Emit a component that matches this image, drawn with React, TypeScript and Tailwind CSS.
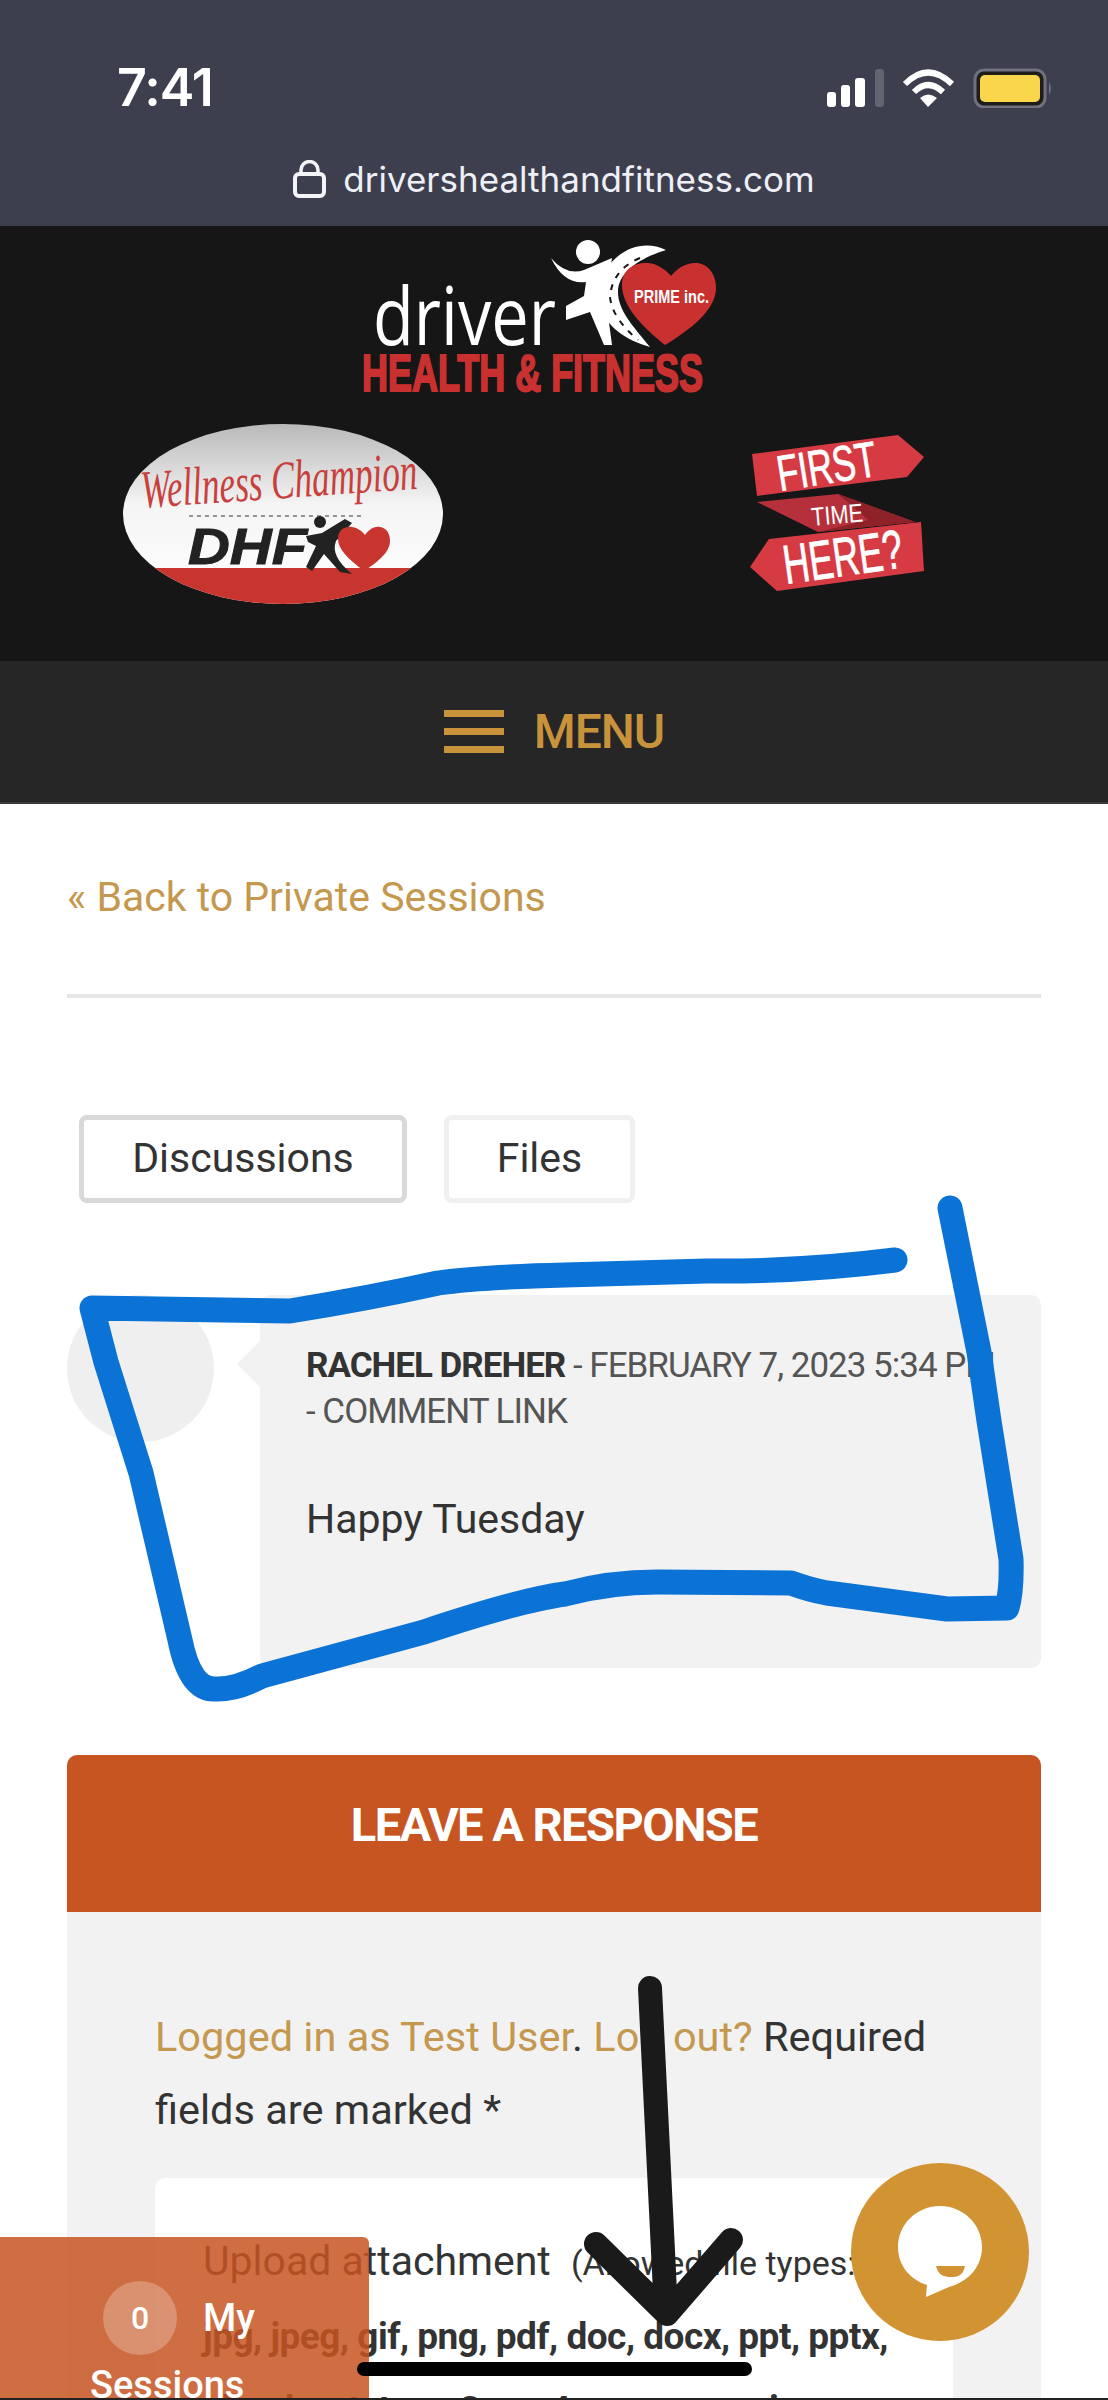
import React from "react";

const sans = "font-['Roboto',sans-serif]";

const StatusIcons = () => (
  <svg width="226" height="40" viewBox="827 67 226 40" className="block">
    {/* signal */}
    <rect x="827" y="91" width="9" height="15" rx="3" fill="#fff" />
    <rect x="841" y="84" width="9" height="22" rx="3" fill="#fff" />
    <rect x="855" y="77" width="10" height="29" rx="3" fill="#fff" />
    <rect x="875" y="68" width="9" height="38" rx="3" fill="#62646f" />
    {/* wifi */}
    <path d="M905 83 Q928 60 952 83" fill="none" stroke="#fff" strokeWidth="6" />
    <path d="M914 91 Q928 77 943 91" fill="none" stroke="#fff" strokeWidth="6" />
    <path d="M920 97 L928 106 L937 97 Q928 90 920 97 Z" fill="#fff" />
    {/* battery */}
    <rect x="975" y="69" width="70" height="37" rx="9" fill="#1f1d18" stroke="#6f7180" strokeWidth="3" />
    <rect x="980" y="74" width="60" height="27" rx="5" fill="#f9d64b" />
    <path d="M1049 81 Q1053 87 1049 94 Z" fill="#6f7180" />
  </svg>
);

const LockIcon = () => (
  <svg width="33" height="38" viewBox="0 0 33 38" className="block">
    <rect x="2" y="14" width="29" height="22" rx="4" fill="none" stroke="#f3f4f8" strokeWidth="4" />
    <path d="M8 14 V10 a8.5 8.5 0 0 1 17 0 V14" fill="none" stroke="#f3f4f8" strokeWidth="3.5" />
  </svg>
);

const MainLogo = () => (
  <svg width="370" height="165" viewBox="355 235 370 165" className="block">
    <text x="373" y="345" fontFamily="'Open Sans',sans-serif" fontWeight="400" fontSize="80" fill="#fff" textLength="183" lengthAdjust="spacingAndGlyphs">driver</text>
    <circle cx="588" cy="252" r="12" fill="#fff" />
    {/* road curling round the heart */}
    <path d="M666 250 C630 232 590 270 601 307 C606 326 625 340 650 347 C632 325 618 310 618 292 C618 272 640 258 666 250 Z" fill="#fff" />
    <path d="M640 258 Q612 270 610 297 Q612 318 638 340" fill="none" stroke="#161617" strokeWidth="2" strokeDasharray="6 7" />
    {/* runner */}
    <path d="M551 258 Q566 276 584 270 L612 258 L606 300 L612 345 L604 345 L590 312 L566 320 L566 306 L584 296 L586 282 Q564 285 551 258 Z" fill="#fff" />
    {/* heart */}
    <path d="M665 345 C640 325 622 305 622 285 C622 268 636 262 648 263 C658 264 666 270 671 276 C677 268 687 262 698 263 C710 265 716 276 716 288 C716 310 690 330 665 345 Z" fill="#c8312f" />
    <text x="634" y="303" fontFamily="'Liberation Sans',sans-serif" fontWeight="700" fontSize="18" fill="#fff" textLength="75" lengthAdjust="spacingAndGlyphs">PRIME inc.</text>
    <text x="362" y="391" fontFamily="'Liberation Sans',sans-serif" fontWeight="700" fontSize="51" fill="#c8312f" stroke="#c8312f" strokeWidth="2" textLength="341" lengthAdjust="spacingAndGlyphs">HEALTH &amp; FITNESS</text>
  </svg>
);

const ChampionBadge = () => (
  <svg width="322" height="182" viewBox="122 422 322 182" className="block">
    <defs>
      <linearGradient id="oval" x1="0" y1="0" x2="0" y2="1">
        <stop offset="0" stopColor="#b9b9b9" />
        <stop offset="0.45" stopColor="#f5f5f5" />
        <stop offset="1" stopColor="#ffffff" />
      </linearGradient>
      <clipPath id="ovalClip">
        <ellipse cx="283" cy="513" rx="160" ry="90" />
      </clipPath>
    </defs>
    <ellipse cx="283" cy="513" rx="160" ry="90" fill="url(#oval)" />
    <rect x="120" y="567" width="330" height="40" fill="#c8352f" clipPath="url(#ovalClip)" />
    <text x="142" y="507" transform="rotate(-4 142 507)" fontFamily="'Liberation Serif',serif" fontStyle="italic" fontSize="54" fill="#c8403c" textLength="277" lengthAdjust="spacingAndGlyphs">Wellness Champion</text>
    <line x1="189" y1="515" x2="361" y2="515" stroke="#777" strokeWidth="1.5" strokeDasharray="4 4" />
    <text x="188" y="563" fontFamily="'Liberation Sans',sans-serif" fontWeight="700" fontStyle="italic" fontSize="50" fill="#222" stroke="#222" textLength="119" lengthAdjust="spacingAndGlyphs">DHF</text>
    <circle cx="320" cy="521" r="6" fill="#222" />
    <path d="M306 535 L322 532 L345 518 L352 522 L336 540 Q330 555 352 573 L340 571 L324 553 L312 570 L306 566 L316 545 L308 541 Z" fill="#222" />
    <path d="M364 570 C348 558 338 548 338 538 C338 528 346 525 352 526 C358 527 362 530 365 534 C368 530 373 525 380 526 C387 527 390 533 390 540 C390 552 376 562 364 570 Z" fill="#c8352f" />
  </svg>
);

const FirstTimeBanner = () => (
  <svg width="176" height="160" viewBox="750 435 176 160" className="block">
    <polygon points="757,503 838,495 915,523 818,533" fill="#b5303a" />
    <polygon points="838,495 915,523 818,533 868,521" fill="#8f2229" />
    <polygon points="752,455 898,436 924,458 907,478 757,497" fill="#d63b44" />
    <polygon points="769,540 921,523 924,572 777,592 750,568" fill="#d63b44" />
    <text x="780" y="492" transform="rotate(-9 780 492)" fontFamily="'Liberation Sans',sans-serif" fontSize="50" fill="#fff" stroke="#fff" strokeWidth="0.8" textLength="100" lengthAdjust="spacingAndGlyphs">FIRST</text>
    <text x="812" y="527" transform="rotate(-5 812 527)" fontFamily="'Liberation Sans',sans-serif" fontSize="26" fill="#fff" textLength="52" lengthAdjust="spacingAndGlyphs">TIME</text>
    <text x="786" y="585" transform="rotate(-8 786 585)" fontFamily="'Liberation Sans',sans-serif" fontSize="55" fill="#fff" stroke="#fff" strokeWidth="0.8" textLength="120" lengthAdjust="spacingAndGlyphs">HERE?</text>
  </svg>
);

const ChatBubble = () => (
  <div className="absolute left-[851px] top-[2163px] w-[178px] h-[178px] rounded-full bg-[#d29433] flex items-center justify-center">
    <svg width="86" height="92" viewBox="0 0 86 92">
      <path d="M43 0 C66 0 85 18 85 41 C85 62 70 76 52 81 L29 91 L30 79 C12 73 1 59 1 41 C1 18 20 0 43 0 Z" fill="#fff" />
      <path d="M39 60 H68 C66 70 60 71 54 71 C47 71 41 69 39 60 Z" fill="#d29433" />
    </svg>
  </div>
);

// hand drawn markup sitting on top of the screenshot
const Annotations = () => (
  <svg width="1108" height="2400" viewBox="0 0 1108 2400" className="absolute left-0 top-0 pointer-events-none">
    <path
      d="M895 1260 Q800 1272 707 1271 L565 1275 Q480 1277 438 1283 Q370 1298 290 1311 L92 1308 L106 1362 L141 1473 L180 1640 Q190 1690 215 1689 Q235 1690 262 1676 L424 1632 Q520 1600 565 1594 Q610 1582 657 1582 L791 1583 Q810 1590 827 1593 L947 1609 L1007 1608 Q1012 1590 1011 1559 L989 1421 L979 1352 L950 1208"
      fill="none"
      stroke="#0b72d6"
      strokeWidth="25"
      strokeLinecap="round"
      strokeLinejoin="round"
    />
    <path d="M650 1988 L666 2312 M596 2244 L667 2314 L731 2240" fill="none" stroke="#1a1a1a" strokeWidth="24" strokeLinecap="round" strokeLinejoin="round" />
  </svg>
);

export default function App() {
  return (
    <div className={`relative w-[1108px] h-[2400px] overflow-hidden bg-white ${sans}`}>
      {/* browser chrome */}
      <div className="h-[226px] bg-[#3d3f4e] text-white font-['Inter',sans-serif]">
        <div className="flex items-center justify-between pt-[60px] pl-[117px] pr-[55px]">
          <span className="text-[52px] leading-[56px] font-semibold tracking-[-1px]">7:41</span>
          <StatusIcons />
        </div>
        <div className="flex items-center justify-center gap-[17px] mt-[41px]">
          <LockIcon />
          <span className="text-[35px] leading-[44px] text-[#eef0f6]">drivershealthandfitness.com</span>
        </div>
      </div>

      {/* site header */}
      <div className="h-[435px] bg-[#161617] pt-[9px]">
        <div className="flex justify-center mr-[28px]">
          <MainLogo />
        </div>
        <div className="flex items-start justify-between pl-[122px] pr-[182px] mt-[23px]">
          <ChampionBadge />
          <div className="mt-[11px]">
            <FirstTimeBanner />
          </div>
        </div>
      </div>

      {/* menu bar */}
      <div className="h-[143px] bg-[#262626] flex items-center justify-center gap-[30px] border-b-2 border-[#3a3a3a]">
        <div className="flex flex-col gap-[11px] w-[60px]">
          <div className="h-[7px] bg-[#c8933a]" />
          <div className="h-[7px] bg-[#c8933a]" />
          <div className="h-[7px] bg-[#c8933a]" />
        </div>
        <span className="text-[48px] leading-none font-medium tracking-[-1px] text-[#c8933a]">MENU</span>
      </div>

      {/* page content */}
      <div className="px-[67px]">
        <a className="block mt-[69px] text-[41px] leading-[48px] text-[#c4984f]">« Back to Private Sessions</a>
        <div className="h-[4px] bg-[#e6e6e6] mt-[73px]" />

        <div className="flex gap-[37px] mt-[117px] ml-[12px]">
          <div className="w-[328px] h-[88px] rounded-[8px] border-[5px] border-[#d9d9d9] flex items-center justify-center text-[41px] text-[#333]">
            Discussions
          </div>
          <div className="w-[191px] h-[88px] rounded-[8px] border-[5px] border-[#f0f0f0] flex items-center justify-center text-[41px] text-[#333]">
            Files
          </div>
        </div>

        {/* comment */}
        <div className="flex mt-[92px]">
          <div className="w-[147px] h-[147px] rounded-full bg-[#efefef] shrink-0" />
          <div className="relative ml-[46px] flex-1 h-[373px] rounded-[10px] bg-[#f2f2f2] pl-[46px] pr-[20px] pt-[48px]">
            <div className="absolute left-[-23px] top-[46px] w-0 h-0 border-y-[23px] border-y-transparent border-r-[23px] border-r-[#f2f2f2]" />
            <p className="text-[35px] leading-[46px] tracking-[-1px] text-[#555]">
              <strong className="font-bold text-[#333]">RACHEL DREHER</strong> - FEBRUARY 7, 2023 5:34 PM
              <br />- COMMENT LINK
            </p>
            <p className="mt-[60px] text-[41px] leading-[48px] text-[#333]">Happy Tuesday</p>
          </div>
        </div>

        {/* response form */}
        <div className="mt-[87px] bg-[#f2f2f2] rounded-t-[10px]">
          <div className="h-[157px] bg-[#c75522] rounded-t-[10px] pt-[42px] text-center text-[47px] leading-[56px] font-bold tracking-[-1.5px] text-white">
            LEAVE A RESPONSE
          </div>
          <div className="px-[88px] pt-[88px]">
            <p className="text-[41.5px] leading-[73px] text-[#333]">
              <a className="text-[#c4984f]">Logged in as Test User</a>. <a className="text-[#c4984f]">Log out?</a> Required fields are marked *
            </p>
            <div className="mt-[32px] bg-white rounded-[10px] px-[48px] pt-[47px] pb-[60px] text-[#333]">
              <p className="text-[41px] leading-[73px] whitespace-nowrap">
                Upload attachment <span className="text-[34px] ml-[10px]">(Allowed file types:</span>
              </p>
              <p className="text-[37px] leading-[73px] font-bold tracking-[-0.5px]">
                jpg, jpeg, gif, png, pdf, doc, docx, ppt, pptx, xls, xlsx, txt, mp3, mp4, wav, mov, zip
              </p>
            </div>
          </div>
        </div>
      </div>

      {/* floating session tab */}
      <div className="absolute left-0 top-[2237px] w-[369px] h-[163px] rounded-tr-[6px] bg-[#c75522]/85 text-white text-[38px] leading-[48px] font-medium">
        <div className="flex items-center gap-[26px] pl-[103px] pt-[44px]">
          <span className="w-[74px] h-[74px] rounded-full bg-white/25 flex items-center justify-center text-[32px]">0</span>
          <span>My</span>
        </div>
        <div className="pl-[90px] mt-[6px]">Sessions</div>
      </div>

      <ChatBubble />
      <Annotations />

      {/* home indicator */}
      <div className="absolute left-[357px] top-[2362px] w-[395px] h-[14px] rounded-full bg-black" />
      <div className="absolute left-0 top-[2398px] w-full h-[2px] bg-[#222]" />
    </div>
  );
}
